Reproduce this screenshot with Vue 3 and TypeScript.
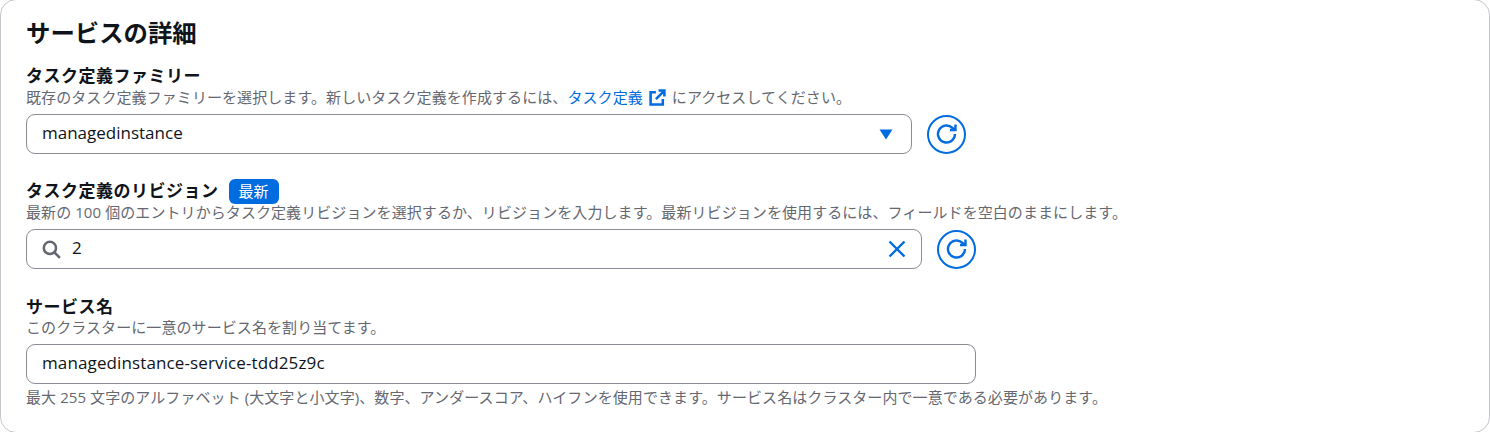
<script setup lang="ts">
const family = "managedinstance";
const revision = "2";
const serviceName = "managedinstance-service-tdd25z9c";
</script>

<template>
  <main class="page">
    <section class="card">
      <h2 class="title">サービスの詳細</h2>

      <div class="field">
        <div class="label">タスク定義ファミリー</div>
        <div class="desc">既存のタスク定義ファミリーを選択します。新しいタスク定義を作成するには、<a class="link">タスク定義<svg class="ext" viewBox="0 0 16 16" width="17" height="17"><path d="M9 1.500h5.500V7M14.500 1.500 6.500 9.500M6.500 3H1.500v11.500H13V9.500" fill="none" stroke="currentColor" stroke-width="2.400"/></svg></a>にアクセスしてください。</div>
        <div class="row row-a">
          <div class="box grow">
            <span class="value lifted">{{ family }}</span>
            <svg class="caret" viewBox="0 0 14 11" width="14" height="11"><path d="M0.500 0.500h13L7 10.500z" fill="#006ce0"/></svg>
          </div>
          <button class="refresh" type="button" aria-label="更新">
            <svg viewBox="0 0 24 24" width="24" height="24"><path d="M20 12a8.500 8.500 0 1 1-2.800-6.300L20.500 8M20.500 2.500V8H15" fill="none" stroke="#006ce0" stroke-width="2.400"/></svg>
          </button>
        </div>
      </div>

      <div class="field second">
        <div class="label">タスク定義のリビジョン<span class="badge">最新</span></div>
        <div class="desc">最新の 100 個のエントリからタスク定義リビジョンを選択するか、リビジョンを入力します。最新リビジョンを使用するには、フィールドを空白のままにします。</div>
        <div class="row row-b">
          <div class="box grow">
            <svg class="search" viewBox="0 0 18 18" width="19" height="19"><circle cx="7.500" cy="7.500" r="5.800" fill="none" stroke="#656871" stroke-width="2.400"/><path d="M11.800 11.800 17 17" stroke="#656871" stroke-width="2.400" fill="none"/></svg>
            <span class="value lifted">{{ revision }}</span>
            <svg class="clear" viewBox="0 0 18 18" width="18" height="18"><path d="M1.500 1.500l15 15M16.500 1.500l-15 15" stroke="#006ce0" stroke-width="2.400" fill="none"/></svg>
          </div>
          <button class="refresh" type="button" aria-label="更新">
            <svg viewBox="0 0 24 24" width="24" height="24"><path d="M20 12a8.500 8.500 0 1 1-2.800-6.300L20.500 8M20.500 2.500V8H15" fill="none" stroke="#006ce0" stroke-width="2.400"/></svg>
          </button>
        </div>
      </div>

      <div class="field third">
        <div class="label">サービス名</div>
        <div class="desc">このクラスターに一意のサービス名を割り当てます。</div>
        <div class="box name"><span class="value lifted wide">{{ serviceName }}</span></div>
        <div class="desc hint">最大 255 文字のアルファベット (大文字と小文字)、数字、アンダースコア、ハイフンを使用できます。サービス名はクラスター内で一意である必要があります。</div>
      </div>
    </section>
  </main>
</template>

<style>
html, body { margin: 0; background: #fff; overflow: hidden; }
</style>

<style scoped>
.page {
  height: 432px;
  overflow: hidden;
  font-family: "Open Sans", "Noto Sans CJK JP", sans-serif;
  color: #0f141a;
}
.card {
  box-sizing: border-box;
  height: 434px;
  margin-top: -1px;
  padding: 16px 25px 0;
  border: 1px solid #c6c6cd;
  border-radius: 16px;
  background: #fff;
}
.title {
  margin: 0;
  font-size: 24.400px;
  line-height: 34px;
  font-weight: 700;
}
.field { margin-top: 14px; }
.second { margin-top: 25px; }
.third { margin-top: 26px; }
.third .label { margin-bottom: -1px; }
.label {
  display: flex;
  align-items: center;
  font-size: 17px;
  line-height: 23px;
  font-weight: 700;
  letter-spacing: 0.500px;
}
.desc {
  font-size: 15px;
  line-height: 20px;
  padding-bottom: 2px;
  color: #656871;
  letter-spacing: 0.080px;
  white-space: nowrap;
}
.link { color: #006ce0; }
.ext { margin: 0 6px; vertical-align: -3px; }
.badge {
  margin-left: 10px;
  margin-bottom: -2px;
  padding: 0 10px;
  height: 25px;
  line-height: 25px;
  border-radius: 6px;
  background: #006ce0;
  color: #fff;
  font-size: 15px;
  font-weight: 400;
  letter-spacing: 0;
}
.row {
  display: flex;
  align-items: center;
  gap: 15px;
  margin-top: 5px;
}
.row-a { width: 940px; }
.row-b { width: 950px; }
.grow { flex: 1; }
.box {
  box-sizing: border-box;
  display: flex;
  align-items: center;
  height: 40px;
  padding: 0 15px;
  border: 1px solid #8c8c94;
  border-radius: 9px;
  background: #fff;
}
.name { width: 950px; margin-top: 5px; }
.value { flex: 1; font-size: 17px; line-height: 24px; }
.lifted { padding-bottom: 2px; }
.wide { letter-spacing: 0.120px; }
.caret { margin-right: 3px; }
.search { margin-right: 11px; }
.refresh {
  box-sizing: border-box;
  display: flex;
  align-items: center;
  justify-content: center;
  width: 39px;
  height: 39px;
  padding: 0;
  border: 2px solid #006ce0;
  border-radius: 50%;
  background: #fff;
}
.hint { margin-top: 3px; }
</style>
